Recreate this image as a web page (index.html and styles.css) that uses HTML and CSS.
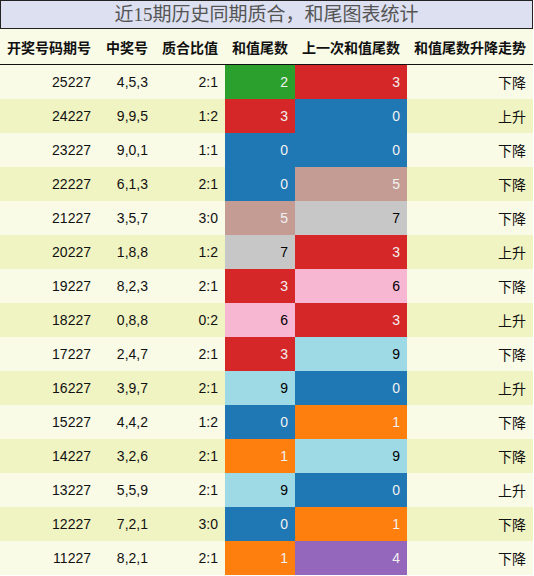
FILE: index.html
```html
<!DOCTYPE html>
<html>
<head>
    <title>和尾图表统计</title>
    <link rel="stylesheet" href="styles.css">
</head>
<body>
    <div class="caption">近15期历史同期质合，和尾图表统计</div>
    <table class="stats">
        <thead>
            <tr>
                <th class="c1">开奖号码期号</th>
                <th class="c2">中奖号</th>
                <th class="c3">质合比值</th>
                <th class="c4">和值尾数</th>
                <th class="c5">上一次和值尾数</th>
                <th class="c6">和值尾数升降走势</th>
            </tr>
        </thead>
        <tbody>
            <tr><td>25227</td><td>4,5,3</td><td>2:1</td><td class="d2">2</td><td class="d3">3</td><td>下降</td></tr>
            <tr><td>24227</td><td>9,9,5</td><td>1:2</td><td class="d3">3</td><td class="d0">0</td><td>上升</td></tr>
            <tr><td>23227</td><td>9,0,1</td><td>1:1</td><td class="d0">0</td><td class="d0">0</td><td>下降</td></tr>
            <tr><td>22227</td><td>6,1,3</td><td>2:1</td><td class="d0">0</td><td class="d5">5</td><td>下降</td></tr>
            <tr><td>21227</td><td>3,5,7</td><td>3:0</td><td class="d5">5</td><td class="d7">7</td><td>下降</td></tr>
            <tr><td>20227</td><td>1,8,8</td><td>1:2</td><td class="d7">7</td><td class="d3">3</td><td>上升</td></tr>
            <tr><td>19227</td><td>8,2,3</td><td>2:1</td><td class="d3">3</td><td class="d6">6</td><td>下降</td></tr>
            <tr><td>18227</td><td>0,8,8</td><td>0:2</td><td class="d6">6</td><td class="d3">3</td><td>上升</td></tr>
            <tr><td>17227</td><td>2,4,7</td><td>2:1</td><td class="d3">3</td><td class="d9">9</td><td>下降</td></tr>
            <tr><td>16227</td><td>3,9,7</td><td>2:1</td><td class="d9">9</td><td class="d0">0</td><td>上升</td></tr>
            <tr><td>15227</td><td>4,4,2</td><td>1:2</td><td class="d0">0</td><td class="d1">1</td><td>下降</td></tr>
            <tr><td>14227</td><td>3,2,6</td><td>2:1</td><td class="d1">1</td><td class="d9">9</td><td>下降</td></tr>
            <tr><td>13227</td><td>5,5,9</td><td>2:1</td><td class="d9">9</td><td class="d0">0</td><td>上升</td></tr>
            <tr><td>12227</td><td>7,2,1</td><td>3:0</td><td class="d0">0</td><td class="d1">1</td><td>下降</td></tr>
            <tr><td>11227</td><td>8,2,1</td><td>2:1</td><td class="d1">1</td><td class="d4">4</td><td>下降</td></tr>
        </tbody>
    </table>
</body>
</html>
```
FILE: styles.css
```css
body {
    margin: 0;
    padding: 0;
    background-color: #fff;
    font-family: "Liberation Sans", "Noto Sans CJK SC", sans-serif;
}

.caption {
    width: 531px;
    height: 27px;
    line-height: 27px;
    border: 1px solid #222;
    background-color: #dce0f0;
    color: #555;
    font-family: "Liberation Serif", "Noto Sans CJK SC", serif;
    font-size: 19px;
    text-align: center;
}

.stats {
    width: 533px;
    border-collapse: collapse;
    table-layout: fixed;
    font-size: 14px;
}

.stats th,
.stats td {
    padding: 0 7px;
    text-align: right;
    white-space: nowrap;
}

.stats th {
    height: 35px;
    background-color: #f9fbe7;
    color: #111;
    font-weight: bold;
    border-bottom: 1px solid #111;
}

.stats td {
    height: 34px;
    color: #111;
}

.stats tbody tr:nth-child(odd) {
    background-color: #f9fbe7;
}

.stats tbody tr:nth-child(even) {
    background-color: #f0f4c3;
}

.c1 { width: 84px; }
.c2 { width: 43px; }
.c3 { width: 56px; }
.c4 { width: 56px; }
.c5 { width: 98px; }
.c6 { width: 112px; }

/* tail digit colours */
.stats td.d0 { background-color: #1f77b4; color: #f1f1f1; }
.stats td.d1 { background-color: #ff7f0e; color: #f1f1f1; }
.stats td.d2 { background-color: #2ca02c; color: #f1f1f1; }
.stats td.d3 { background-color: #d62728; color: #f1f1f1; }
.stats td.d4 { background-color: #9467bd; color: #f1f1f1; }
.stats td.d5 { background-color: #c49c94; color: #f1f1f1; }
.stats td.d6 { background-color: #f7b6d2; color: #000; }
.stats td.d7 { background-color: #c7c7c7; color: #000; }
.stats td.d8 { background-color: #dbdb8d; color: #000; }
.stats td.d9 { background-color: #9edae5; color: #000; }
```
